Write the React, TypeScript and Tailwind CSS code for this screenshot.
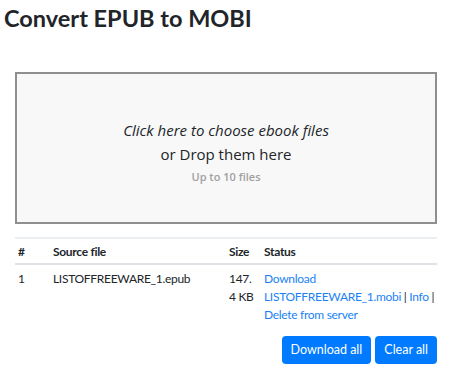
export default function App() {
  const font = "font-['Open_Sans','Noto_Sans',sans-serif]";
  const tableFont = "font-['Lato','Open_Sans',sans-serif]";
  return (
    <div className={`w-[450px] h-[366px] bg-white text-[#212529] overflow-hidden ${font}`}>
      <h1 className={`pl-[4px] pt-[1px] text-[23.5px] leading-[34px] font-bold ${tableFont}`}>Convert EPUB to MOBI</h1>

      <div className="ml-[15px] w-[422px]">
        <div className="mt-[37px] h-[152px] border-2 border-[#8f8f8f] bg-[#f8f8f8] flex flex-col items-center justify-center cursor-pointer">
          <p className="text-[15px] leading-[20px] italic font-medium mt-[8px]">Click here to choose ebook files</p>
          <p className="text-[15px] leading-[20px] font-medium mt-[4px]">or Drop them here</p>
          <p className="text-[11px] leading-[16px] font-semibold text-[#a0a0a0] mt-[5px]">Up to 10 files</p>
        </div>

        <table className={`mt-[13px] w-full table-fixed border-t-2 border-[#eceff1] text-[12px] tracking-[-0.3px] leading-[18px] border-collapse ${tableFont}`}>
          <thead>
            <tr className="border-b-2 border-[#dee2e6]">
              <th className="w-[35px] text-left font-bold pl-[3px] pt-[4px] pb-[2px]">#</th>
              <th className="w-[176px] text-left font-bold pl-[3px] pt-[4px] pb-[2px]">Source file</th>
              <th className="w-[35px] text-left font-bold pl-[3px] pt-[4px] pb-[2px]">Size</th>
              <th className="text-left font-bold pl-[3px] pt-[4px] pb-[2px]">Status</th>
            </tr>
          </thead>
          <tbody>
            <tr className="align-top">
              <td className="pl-[3px] pt-[5px]">1</td>
              <td className="pl-[3px] pt-[5px]">LISTOFFREEWARE_1.epub</td>
              <td className="pl-[3px] pt-[5px] whitespace-nowrap">
                147.
                <br />4 KB
              </td>
              <td className="pl-[3px] pt-[5px] whitespace-nowrap">
                <a className="text-[#1a82f5]" href="#">Download</a>
                <br />
                <a className="text-[#1a82f5]" href="#">LISTOFFREEWARE_1.mobi</a> |{" "}
                <a className="text-[#1a82f5]" href="#">Info</a> |
                <br />
                <a className="text-[#1a82f5]" href="#">Delete from server</a>
              </td>
            </tr>
          </tbody>
        </table>

        <div className={`mt-[12px] flex justify-end gap-[4px] ${tableFont}`}>
          <button className="h-[28px] px-[9px] rounded-[4px] bg-[#007bff] text-white text-[12.5px]">Download all</button>
          <button className="h-[28px] px-[9px] rounded-[4px] bg-[#007bff] text-white text-[12.5px]">Clear all</button>
        </div>
      </div>
    </div>
  );
}
